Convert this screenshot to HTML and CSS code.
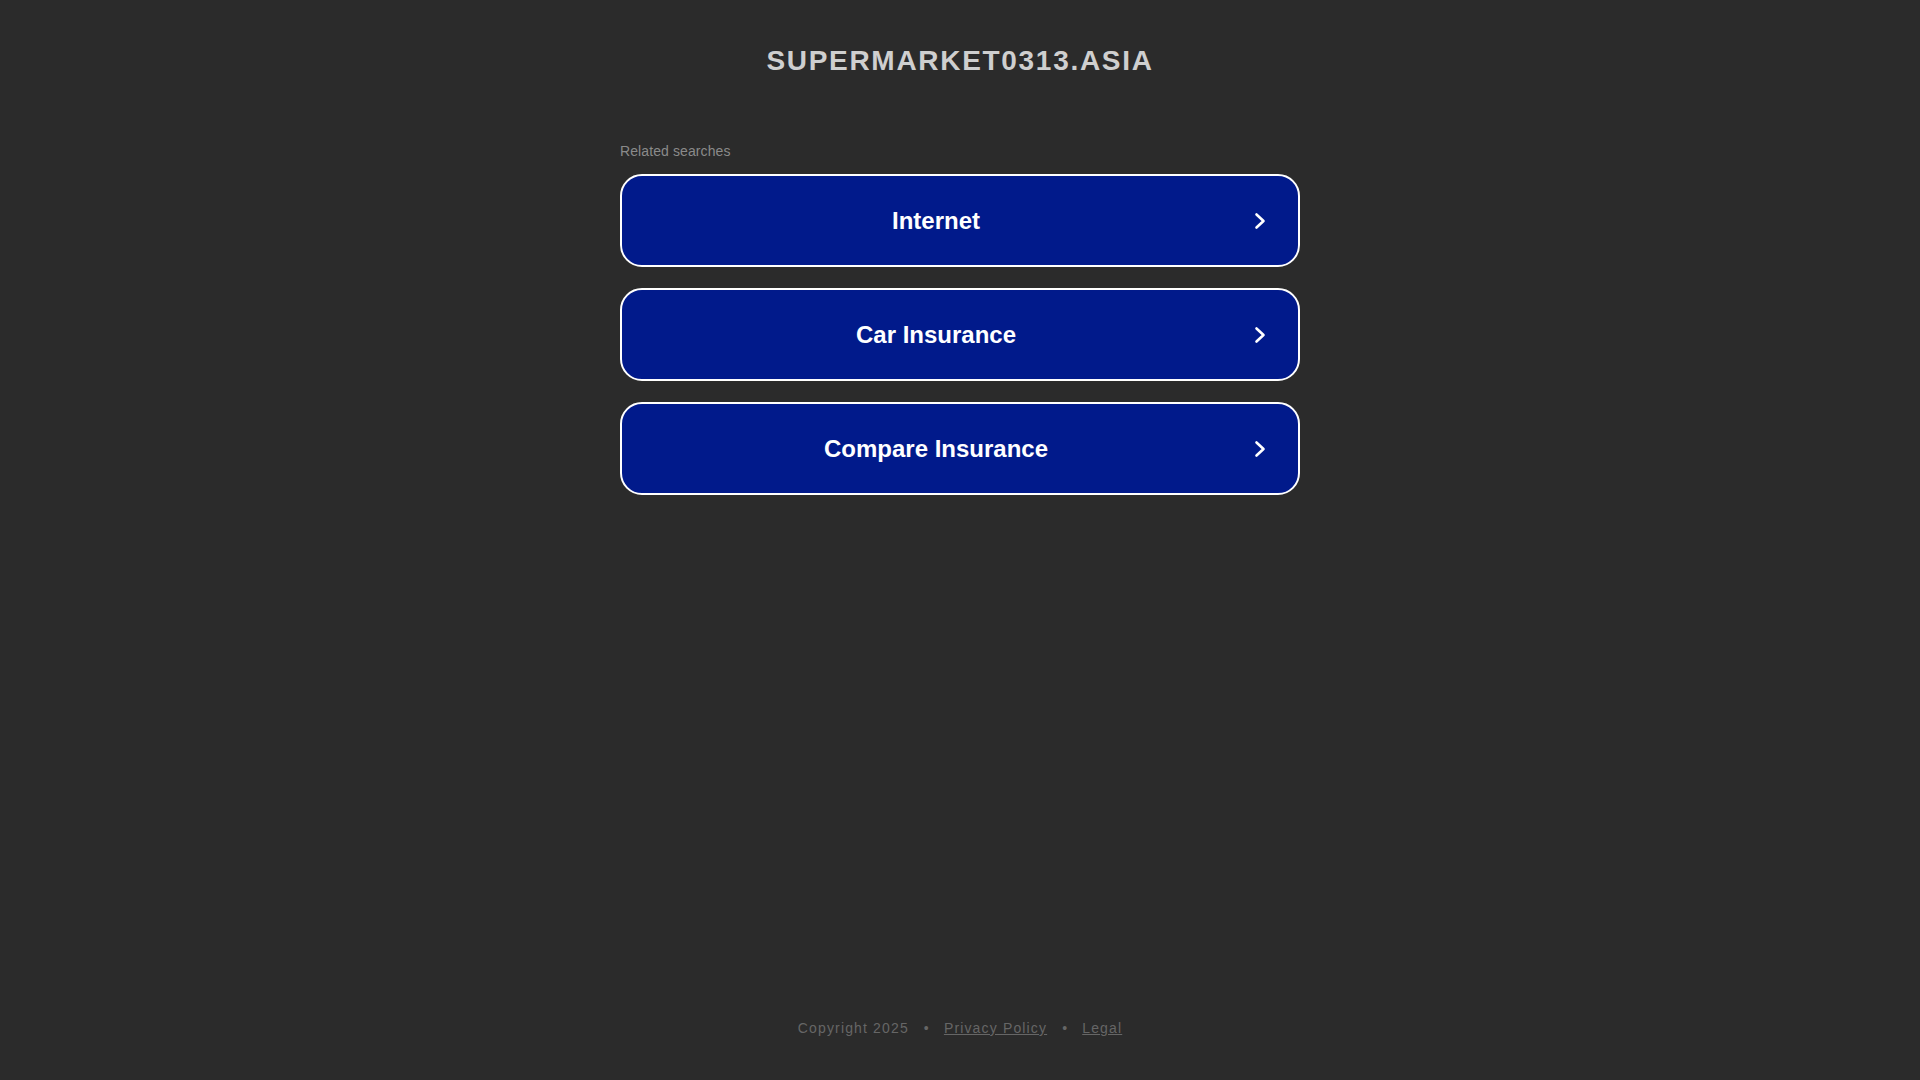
FILE: index.html
```html
<!DOCTYPE html>
<html lang="en">
<head>
<meta charset="utf-8">
<title>supermarket0313.asia</title>
<link rel="stylesheet" href="styles.css">
</head>
<body>
<header class="header">
  <h1 class="domain">SUPERMARKET0313.ASIA</h1>
</header>
<main class="content">
  <div class="related-label">Related searches</div>
  <div class="links">
    <a class="link-btn" href="#">
      <span class="link-text">Internet</span>
      <span class="link-arrow"><svg width="12" height="18" viewBox="0 0 12 18"><path d="M2.5 2.5 L9.5 9 L2.5 15.5" fill="none" stroke="#ffffff" stroke-width="2.6" stroke-linecap="round" stroke-linejoin="round"/></svg></span>
    </a>
    <a class="link-btn" href="#">
      <span class="link-text">Car Insurance</span>
      <span class="link-arrow"><svg width="12" height="18" viewBox="0 0 12 18"><path d="M2.5 2.5 L9.5 9 L2.5 15.5" fill="none" stroke="#ffffff" stroke-width="2.6" stroke-linecap="round" stroke-linejoin="round"/></svg></span>
    </a>
    <a class="link-btn" href="#">
      <span class="link-text">Compare Insurance</span>
      <span class="link-arrow"><svg width="12" height="18" viewBox="0 0 12 18"><path d="M2.5 2.5 L9.5 9 L2.5 15.5" fill="none" stroke="#ffffff" stroke-width="2.6" stroke-linecap="round" stroke-linejoin="round"/></svg></span>
    </a>
  </div>
</main>
<footer class="footer">
  <span>Copyright 2025</span>
  <span class="sep">•</span>
  <a href="#" class="footer-link">Privacy Policy</a>
  <span class="sep">•</span>
  <a href="#" class="footer-link">Legal</a>
</footer>
</body>
</html>
```

FILE: styles.css
```css
html, body {
  margin: 0;
  padding: 0;
}
body {
  background: #2b2b2b;
  font-family: "Liberation Sans", Arial, sans-serif;
  min-height: 100vh;
  display: flex;
  flex-direction: column;
}
.header {
  padding-top: 44px;
  text-align: center;
}
.domain {
  margin: 0;
  font-size: 28px;
  line-height: 34px;
  font-weight: bold;
  letter-spacing: 1.7px;
  color: #cfcfcf;
}
.content {
  width: 680px;
  margin: 65px auto 0;
}
.related-label {
  font-size: 14px;
  line-height: 17px;
  letter-spacing: 0.1px;
  color: #8a8a8a;
  margin-bottom: 14px;
}
.links {
  display: flex;
  flex-direction: column;
  gap: 21px;
}
.link-btn {
  box-sizing: border-box;
  height: 93px;
  display: flex;
  align-items: center;
  padding: 0 32px;
  background: #011a8b;
  border: 2px solid #ffffff;
  border-radius: 22px;
  text-decoration: none;
  color: #ffffff;
}
.link-text {
  flex: 1;
  text-align: center;
  font-size: 24px;
  font-weight: bold;
  line-height: 28px;
}
.link-arrow {
  width: 48px;
  display: flex;
  justify-content: flex-end;
  align-items: center;
}
.link-arrow svg {
  display: block;
}
.footer {
  margin-top: auto;
  padding-bottom: 43px;
  display: flex;
  justify-content: center;
  align-items: center;
  font-size: 14px;
  line-height: 17px;
  letter-spacing: 1.15px;
  color: #666666;
}
.sep {
  margin: 0 14px 0 15px;
}
.footer-link {
  color: #666666;
  text-decoration: underline;
}
```
